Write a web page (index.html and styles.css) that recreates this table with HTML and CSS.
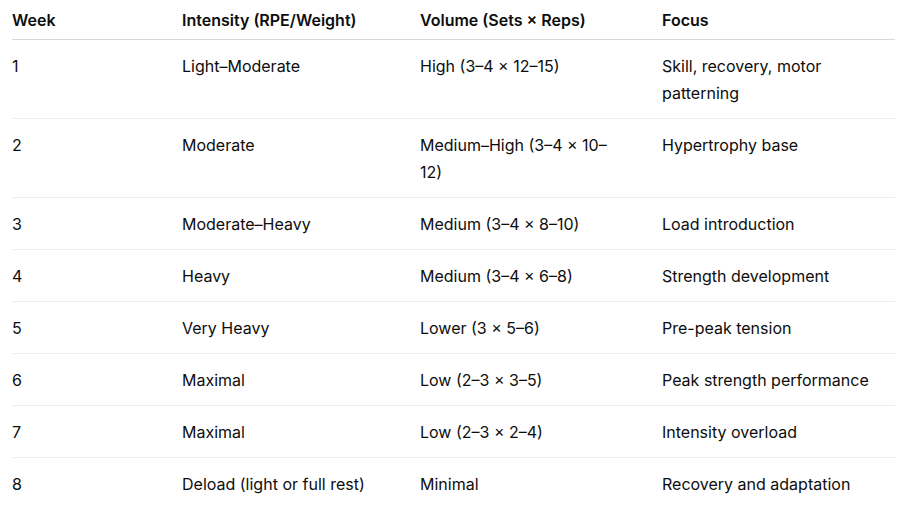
FILE: index.html
```html
<!DOCTYPE html>
<html lang="en">
<head>
<meta charset="utf-8">
<link rel="stylesheet" href="styles.css">
</head>
<body>
<table class="plan">
  <colgroup>
    <col class="c1"><col class="c2"><col class="c3"><col class="c4">
  </colgroup>
  <thead>
    <tr><th>Week</th><th>Intensity (RPE/Weight)</th><th class="vol">Volume (Sets × Reps)</th><th class="focus">Focus</th></tr>
  </thead>
  <tbody>
    <tr><td>1</td><td>Light–Moderate</td><td class="vol">High (3–4 × 12–15)</td><td class="focus">Skill, recovery, motor patterning</td></tr>
    <tr><td>2</td><td>Moderate</td><td class="vol">Medium–High (3–4 × 10–12)</td><td class="focus">Hypertrophy base</td></tr>
    <tr><td>3</td><td>Moderate–Heavy</td><td class="vol">Medium (3–4 × 8–10)</td><td class="focus">Load introduction</td></tr>
    <tr><td>4</td><td>Heavy</td><td class="vol">Medium (3–4 × 6–8)</td><td class="focus">Strength development</td></tr>
    <tr><td>5</td><td>Very Heavy</td><td class="vol">Lower (3 × 5–6)</td><td class="focus">Pre-peak tension</td></tr>
    <tr><td>6</td><td>Maximal</td><td class="vol">Low (2–3 × 3–5)</td><td class="focus">Peak strength performance</td></tr>
    <tr><td>7</td><td>Maximal</td><td class="vol">Low (2–3 × 2–4)</td><td class="focus">Intensity overload</td></tr>
    <tr><td>8</td><td>Deload (light or full rest)</td><td class="vol">Minimal</td><td class="focus">Recovery and adaptation</td></tr>
  </tbody>
</table>
</body>
</html>
```

FILE: styles.css
```css
html, body {
  margin: 0;
  padding: 0;
  background: #ffffff;
}

body {
  font-family: Inter, "Noto Sans", "Liberation Sans", sans-serif;
  font-size: 16px;
  color: #0d0d0d;
}

.plan {
  margin-left: 12px;
  width: 883px;
  border-collapse: collapse;
  table-layout: fixed;
}

.c1 { width: 170px; }
.c2 { width: 238px; }
.c3 { width: 242px; }
.c4 { width: 233px; }

.plan th,
.plan td {
  text-align: left;
  vertical-align: top;
  line-height: 27px;
  padding: 13px 26px 11px 0;
}

.plan .vol {
  padding-right: 40px;
}

.plan .focus {
  padding-right: 22px;
}

.plan th {
  font-weight: 600;
  padding-top: 7px;
  padding-bottom: 5px;
  border-bottom: 1px solid #d9d9d9;
}

.plan td {
  font-weight: 400;
  border-bottom: 1px solid #ececec;
}

.plan tbody tr:last-child td {
  border-bottom: none;
}
```
